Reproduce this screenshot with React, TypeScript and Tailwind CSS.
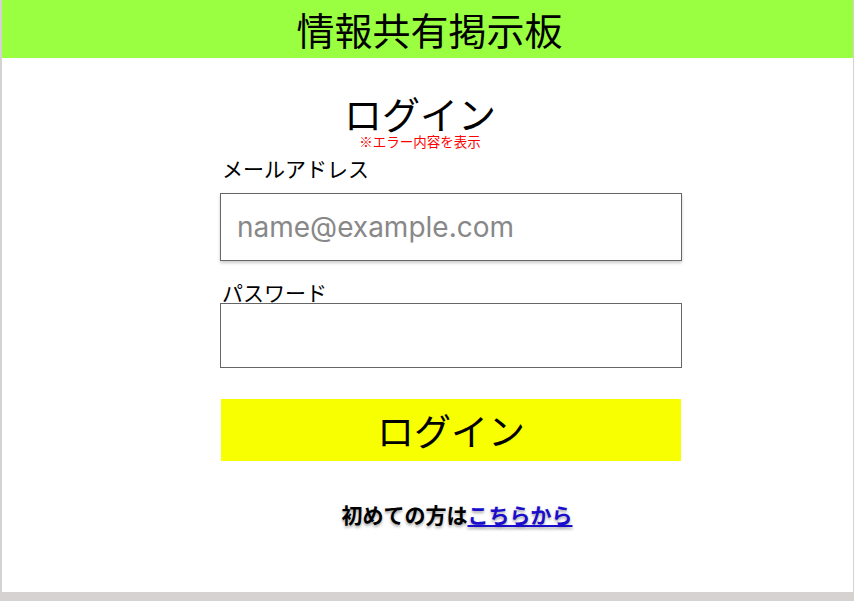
const jp = { fontFamily: '"Noto Sans CJK JP", "Noto Sans", sans-serif' };

const App = () => {
  return (
    <div className="min-h-[601px] bg-[#d6d2d2] pl-[2px] pr-[1px]" style={jp}>
      <div className="h-[592px] bg-white">
        {/* header */}
        <header className="flex h-[58px] items-center justify-center bg-[#99ff40]">
          <h1 className="ml-[4px] text-[38px] leading-none text-black">情報共有掲示板</h1>
        </header>

        {/* login form */}
        <div className="ml-[218px] flex w-[462px] flex-col">
          <div className="mt-[35px] flex w-[400px] flex-col items-center">
            <h2 className="text-[38px] leading-[40px] text-black">ログイン</h2>
            <p className="mt-[1px] text-[13.5px] leading-[15px] text-[#ff0000]">※エラー内容を表示</p>
          </div>

          <label className="mt-[6px] pl-[2px] text-[21px] leading-[26px] text-black">メールアドレス</label>
          <input
            type="email"
            placeholder="name@example.com"
            className="mt-[12px] h-[68px] w-[462px] border border-[#666] px-[16px] text-[28px] shadow-[0_2px_3px_rgba(0,0,0,0.2)] outline-none placeholder:text-[#888]"
            style={{ fontFamily: 'Inter, "Liberation Sans", sans-serif' }}
          />

          <label className="mt-[20px] pl-[2px] text-[21px] leading-[22px] text-black">パスワード</label>
          <input
            type="password"
            className="h-[65px] w-[462px] border border-[#666] px-[16px] text-[24px] outline-none"
          />

          <button className="mt-[31px] ml-[1px] h-[62px] w-[460px] bg-[#f8ff00] text-[37px] leading-none text-black">
            ログイン
          </button>

          <p className="mt-[38px] ml-[12px] text-center text-[21px] font-bold leading-[30px] text-black [text-shadow:0_2px_3px_rgba(0,0,0,0.35)]">
            初めての方は
            <a href="#" className="text-[#1a0dcc] underline">
              こちらから
            </a>
          </p>
        </div>
      </div>
    </div>
  );
};

export default App;
